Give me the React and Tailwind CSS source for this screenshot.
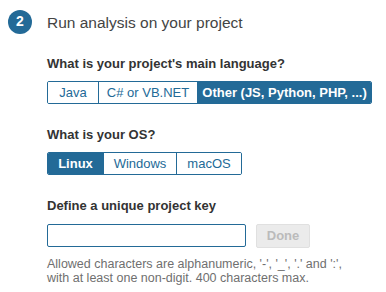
import { useState } from 'react';

const font = { fontFamily: '"Liberation Sans", Arial, sans-serif' };

const Toggle = ({ options, value, onChange }) => (
  <div className="inline-flex border border-[#236a97] rounded-[2px] overflow-hidden">
    {options.map((opt, i) => (
      <button
        key={opt.label}
        onClick={() => onChange(opt.label)}
        className={`h-[21px] text-[13px] leading-none ${opt.width} ${i > 0 ? 'border-l border-[#236a97]' : ''} ${
          value === opt.label ? 'bg-[#236a97] text-white font-bold' : 'bg-white text-[#236a97]'
        }`}
      >
        {opt.label}
      </button>
    ))}
  </div>
);

const languages = [
  { label: 'Java', width: 'w-[50px]' },
  { label: 'C# or VB.NET', width: 'w-[99px]' },
  { label: 'Other (JS, Python, PHP, ...)', width: 'w-[174px]' },
];

const systems = [
  { label: 'Linux', width: 'w-[55px]' },
  { label: 'Windows', width: 'w-[73px]' },
  { label: 'macOS', width: 'w-[65px]' },
];

export default function App() {
  const [language, setLanguage] = useState('Other (JS, Python, PHP, ...)');
  const [os, setOs] = useState('Linux');
  const [key, setKey] = useState('');

  return (
    <div className="bg-white w-[386px] h-[292px] pl-2 pt-[9px]" style={font}>
      {/* step header */}
      <div className="flex items-center gap-[15px]">
        <div className="w-6 h-6 rounded-full bg-[#236a97] text-white text-[14px] font-bold flex items-center justify-center">
          2
        </div>
        <h2 className="text-[15.5px] text-[#444] pt-[2px]">Run analysis on your project</h2>
      </div>

      <div className="ml-[39px]">
        <h3 className="mt-[20px] text-[13px] font-bold text-[#333]">What is your project's main language?</h3>
        <div className="mt-[6px]">
          <Toggle options={languages} value={language} onChange={setLanguage} />
        </div>

        <h3 className="mt-[21px] text-[13px] font-bold text-[#333]">What is your OS?</h3>
        <div className="mt-[7px]">
          <Toggle options={systems} value={os} onChange={setOs} />
        </div>

        <h3 className="mt-[21px] text-[13px] font-bold text-[#333]">Define a unique project key</h3>
        <div className="mt-[8px] flex items-center gap-[10px]">
          <input
            value={key}
            onChange={(e) => setKey(e.target.value)}
            className="w-[199px] h-[23px] border border-[#236a97] rounded-[2px] px-2 text-[13px] outline-none"
          />
          <button disabled className="w-[54px] h-[24px] rounded-[2px] bg-[#ebebeb] border border-[#e0e0e0] text-[#bbb] text-[13px] font-bold">
            Done
          </button>
        </div>
        <p className="mt-[9px] text-[12.5px] leading-[14px] text-[#6f6f6f]">
          Allowed characters are alphanumeric, '-', '_', '.' and ':',<br />
          with at least one non-digit. 400 characters max.
        </p>
      </div>
    </div>
  );
}
